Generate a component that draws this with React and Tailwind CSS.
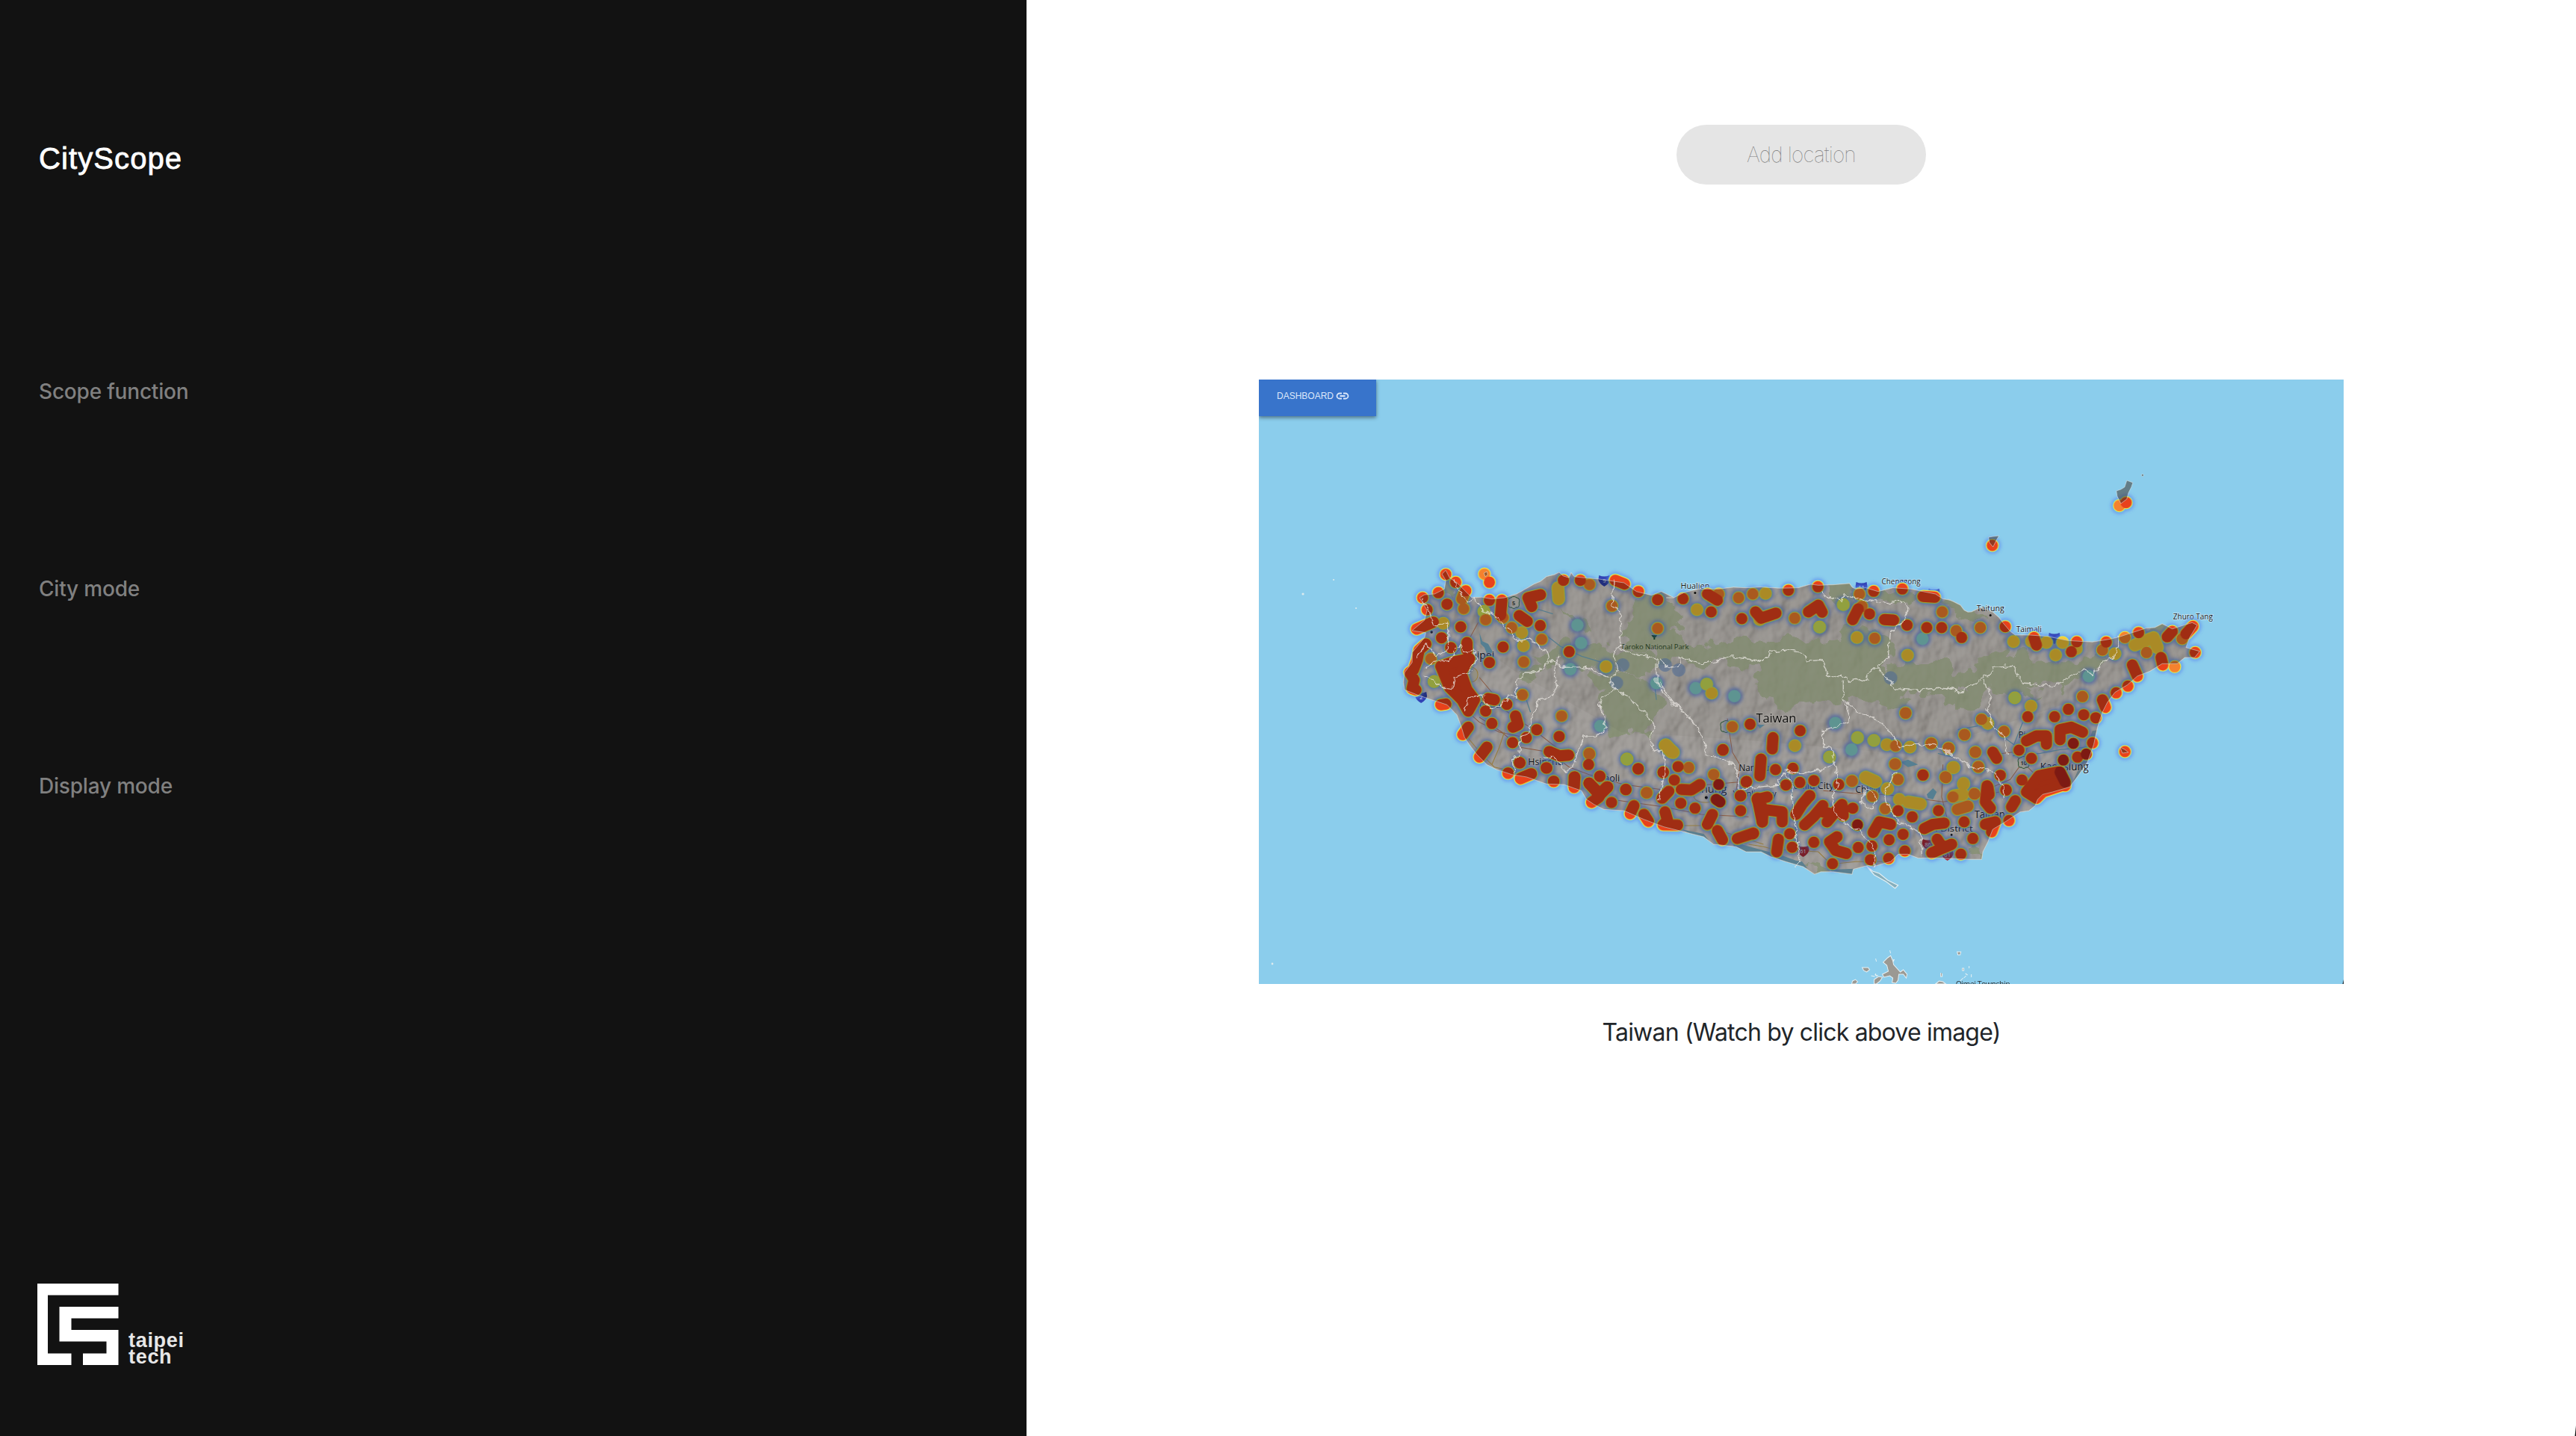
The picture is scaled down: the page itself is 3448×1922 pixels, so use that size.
import React from "react";

const COLORS = {
  r: "#e8421e",
  d: "#b5281a",
  o: "#f5822e",
  y: "#f7c838",
  g: "#d3e85c",
  t: "#8adbd2",
  b: "#749cd7",
};

/* Stations per map tile. Points are in tile units (three per pixel); chained points melt together. */
const TILES = [
  {
    at: [1840, 740],
    r: "285,86;325,118;365,152;192,180;210,228;255,160;290,206;235,278 168,306;345,297;268,341;305,380;205,366 178,390 170,430 155,470 140,480 158,510 150,545 165,550;370,360 370,390;460,190;510,190 505,250;460,118;265,610 285,607;445,635;455,585 480,590;470,685;565,655 575,690 555,700;530,608;375,700 353,730;450,780 420,820;553,762;608,742;650,710;740,737;460,440;515,378;665,168 615,180 630,215;580,252 612,275;664,292;757,110;825,110;965,110 1002,125;1058,155;1135,188;780,397;700,798 740,815 778,812;858,850;1057,866;1158,880;1007,950;583,843;535,884;585,905 628,887;688,863;718,917;803,900 800,935;903,897;860,925 905,970 935,940",
    rf: "265,455 310,440 380,425 345,480 370,550 400,590 375,635 350,590 300,540",
    d: "",
    o: "440,85;358,165 350,185;357,224;445,268;515,260;550,300;670,347;598,438;225,425;862,127;952,213;1135,303;860,805;750,655;593,570;1092,963",
    y: "590,320;275,283;735,140 738,185;597,373;928,457;1165,773 1190,800",
    g: "438,235;238,517;1012,828",
    t: "813,290;828,362;785,467;905,695;1130,523",
    b: "995,450;1165,450;970,522",
  },
  {
    at: [2220, 740],
    r: "97,184;195,165 235,190;210,237;333,264;388,237 410,262 470,242;520,150;638,136;600,237 640,210 655,238;800,225 778,268;845,245;862,154;977,145;1060,175 1107,178;905,268 942,270;996,290;1075,300;1135,300;257,790;458,742 455,787;410,828 405,895;468,870;538,865;567,714;366,688;352,918;510,932;566,922;622,914;722,930;605,975;328,975",
    d: "",
    o: "240,165;320,180;377,165;545,262;805,165;1137,237;866,343;990,643;295,698;1094,765;1163,785;948,848;1060,892;1150,900;775,917;950,775;815,215",
    y: "153,228;428,163;795,340;998,411;212,563;546,774;915,770;1008,780;830,903 868,920;918,947;958,908;1180,862;27,773 58,800;405,268",
    g: "645,298;740,208;797,742;863,753;685,820;192,527",
    t: "303,575;708,683;773,790;1058,345;148,543",
    b: "930,502;25,450;80,470",
  },
  {
    at: [2600, 620],
    r: "198,330;735,158;250,656;75,700;365,700 375,730;537,717;515,757;655,718;785,680;920,675 900,697;1003,655 975,685;1012,760;875,780 882,810;760,810 780,855;742,895;695,922;640,950 652,980;503,988;565,1010;613,1022;340,1018;448,1018;200,1160 215,1185;230,1253;317,1272;253,1312;335,1115 375,1095 415,1095 415,1128;305,1152;355,1185;470,1110 470,1070 515,1060 560,1080;600,1123;540,1180;730,1158;180,1300 185,1330;490,1295",
    rf: "335,1320 385,1255 460,1240 490,1290 400,1320 375,1345",
    d: "523,1125;575,1168;483,1192;470,1240 490,1280",
    o: "708,170;53,673;150,660;640,750;730,700;817,760;930,817;960,705;87,1090;245,1077;155,1028;130,1160;142,1220;22,1143;12,1262;127,1328;560,937",
    y: "355,715;415,720;283,716;480,720;452,770;535,745;690,765;770,730 845,700 860,740;353,975;180,1045;43,1222;82,1290;45,1335 80,1330",
    g: "288,942",
    t: "585,855",
    b: "",
  },
  {
    at: [1960, 940],
    r: "220,242;175,285;225,307 268,288;330,264;358,318;440,300 440,342;543,297;500,325 540,370 570,340;510,402 540,380;590,402;648,350;697,268;797,282;857,258;842,312;820,357 793,385;870,350 910,352 945,330;868,405;925,425;680,415 665,447;720,450 738,478;805,440 815,475 797,492 855,493;1037,192;1130,320;1107,375;1108,435;995,450 975,490;1015,515 1035,552;1095,547 1160,525;1175,385 1195,480",
    d: "1020,330;1010,390 1025,400",
    o: "1000,290;730,363;900,262;502,208",
    y: "808,170 838,202",
    g: "652,228",
    t: "",
    b: "",
  },
  {
    at: [2340, 940],
    r: "75,380 35,390 60,430 55,480;60,430 135,440 135,480;18,528;120,550 113,600;165,528;175,582;262,562;245,375 215,410 190,450;298,415 260,460 225,492;298,440 340,450 315,480;340,450 375,410 380,455;418,425;355,540 325,560 350,595 392,607;337,648;440,583;495,577;489,632;562,627;627,597;500,523 525,480 570,490;564,552;620,530;657,460;600,435;705,507 740,490 785,485;762,435;757,550 780,585 735,605;780,585 815,570;852,610;900,547;865,480;957,335 950,400 970,425;950,490 990,480 975,520;1045,475;1055,420 1070,395;1033,352;700,292",
    rf: "",
    d: "437,492",
    o: "497,377;548,427;415,315;820,380;905,367;838,430 880,417;922,258;600,310;588,248;790,300;732,165;803,185;910,200;866,130;630,43",
    y: "640,400 690,408;605,390;823,262;857,370;863,325;470,300 510,318;557,347",
    g: "",
    t: "",
    b: "",
  },
];

const toPath = (list) =>
  list
    .split(";")
    .filter(Boolean)
    .map((run) => {
      const pts = run.split(" ");
      return pts.length === 1 ? `M${pts[0]}h0.1` : `M${pts.join("L")}`;
    })
    .join("");

function HeatLayer({ kinds, width, color, opacity }) {
  return (
    <g fill="none" strokeLinecap="round" strokeLinejoin="round" opacity={opacity}>
      {kinds.map((k) =>
        TILES.map((t) => (
          <g key={`${k}-${t.at.join("-")}`} transform={`translate(${t.at.join(" ")}) scale(0.33333)`}>
            <path d={toPath(t[k])} stroke={color || COLORS[k]} strokeWidth={width} />
            {k === "r" && t.rf && (
              <path d={`M${t.rf.split(" ").join("L")}Z`} fill={color || COLORS.r} stroke={color || COLORS.r} strokeWidth={width} />
            )}
          </g>
        ))
      )}
    </g>
  );
}

const shift = (ox, oy, pts) =>
  pts
    .split(" ")
    .map((p) => {
      const [x, y] = p.split(",").map(Number);
      return `${(ox + x / 3).toFixed(1)},${(oy + y / 3).toFixed(1)}`;
    })
    .join(" ");

const LAND = [
  shift(1840, 740, "285,70 300,100 330,120 360,150 390,180 430,178 470,185 520,180 570,165 600,148 640,125 665,115 690,95 720,88 740,78 755,92 780,100 788,80 800,95 840,100 900,105 1000,120 1050,155 1110,170 1150,155 1200,180"),
  shift(2220, 740, "30,180 60,180 100,160 160,145 240,145 300,138 350,140 410,137 480,142 560,140 610,126 640,130 700,128 765,123 775,137 790,145 830,140 880,155 940,140 1010,145 1060,155 1110,165 1140,185 1170,190"),
  shift(2600, 620, "20,547 40,555 70,570 85,590 100,598 115,597 150,580 200,598 225,620 240,640 270,675 290,690 350,690 420,695 500,712 600,718 660,708 700,700 760,680 815,662 850,660 880,645 900,655 920,665 1000,640 1020,650 990,700 975,740 1030,755 1010,780 970,780 940,805 880,805 830,835 780,855 740,890 690,920 660,960 640,1000 620,1060 605,1130 580,1200 545,1250 520,1285 510,1300 440,1320 400,1330 380,1350"),
  shift(2340, 940, "1150,415 1125,435 1090,440 1030,480 980,510 960,560 940,600 935,630 880,630 750,625 680,625 640,610 600,610 570,640 530,650 500,660 480,655 420,670 415,690 340,680 290,680 265,690 220,660 150,640 90,620 50,600 0,600"),
  shift(1960, 940, "1130,600 1090,580 1000,570 960,540 880,520 800,500 720,470 640,435 560,430 520,410 490,390 470,355 440,345 400,330 330,328 250,300 190,290 130,270 90,250 50,210 20,170 0,140"),
  shift(1840, 740, "360,740 345,690 330,650 310,630 290,610 230,590 170,570 120,550 115,520 120,480 150,440 150,400 200,340 205,320 150,312 200,270 210,230 180,180 200,168 240,165 280,145 285,110 270,85"),
].join(" ");

const GREENS = [
  shift(1840, 740, "1035,190 1080,170 1130,160 1190,180 1230,190 1235,250 1200,310 1260,350 1280,400 1180,400 1080,395 1010,385 990,340 1020,300 1050,260 1025,220"),
  shift(1840, 740, "840,490 950,480 1050,490 1120,540 1155,580 1145,650 1100,670 1080,740 1000,730 930,710 910,620 900,580 930,545 860,520"),
  shift(1840, 740, "700,390 760,350 880,380 960,430 970,480 880,460 790,460 700,450 640,410"),
  shift(1840, 740, "560,480 640,455 700,440 690,480 640,500 570,500"),
  shift(1840, 740, "730,240 800,240 850,270 880,330 840,320 790,260"),
  shift(1840, 740, "285,100 310,120 330,170 300,172 275,150"),
  shift(1840, 740, "870,390 940,380 1000,390 1100,400 1150,440 1120,500 1010,480 950,440 880,420"),
  shift(2220, 740, "0,370 110,390 200,375 330,340 430,360 560,335 620,350 680,365 780,310 900,330 940,350 925,420 890,460 950,540 1060,550 1160,540 1260,580 1150,600 1010,540 960,640 900,620 830,580 760,610 700,600 640,590 560,615 460,610 400,570 420,520 370,450 270,440 180,460 90,430 0,430"),
  shift(2220, 740, "930,450 1000,440 1150,445 1200,500 1180,550 1050,550 960,550 900,500"),
  shift(2220, 740, "660,130 770,125 790,180 730,190 670,170"),
  shift(2220, 740, "830,170 900,140 990,150 1100,170 1170,190 1230,210 1250,230 1180,230 1100,180 1000,195 900,205"),
  shift(2600, 620, "0,545 40,555 75,590 140,595 180,605 150,630 90,630 30,600"),
  shift(2600, 620, "160,770 260,745 350,770 420,790 560,790 640,760 690,790 630,840 540,870 450,895 330,900 400,930 330,940 260,920 180,930 130,980 40,980 20,930 90,900 0,900 0,820 110,850"),
  shift(2600, 620, "790,670 880,645 920,680 850,690"),
  shift(2340, 940, "215,650 300,665 410,675 400,690 265,688"),
  shift(2340, 940, "915,590 945,590 935,628 910,625"),
];

const BORDERS = [
  shift(1840, 740, "310,105 345,155 370,198 400,182 430,225 480,250 520,290 575,352 625,345 690,400 700,440 650,480 600,480 565,520 570,580 540,570 500,615 460,620 430,570 380,580 360,630"),
  shift(1840, 740, "700,430 760,460 850,458 900,485 940,500 965,548 1005,570 1060,620 1100,660 1125,690 1105,740 1115,800 1150,790 1170,830 1160,900 1140,990"),
  shift(1840, 740, "965,548 920,570 900,605 930,700 890,735 840,735 800,840 770,880 720,820 680,820"),
  shift(1840, 740, "740,410 720,460 730,540 700,580 655,590 630,670 610,730 585,740 580,820 550,830 560,880"),
  shift(1840, 740, "960,110 950,210 993,245 985,370 960,400 975,480 940,500"),
  shift(1840, 740, "970,380 1040,405 1130,425 1130,520 1150,550 1200,610"),
  shift(1840, 740, "192,180 212,225 235,290 265,290 290,285 300,330 290,390 250,410 205,365 165,420"),
  shift(1840, 740, "200,470 230,440 300,430 340,370 360,400 400,390 410,430 380,480 320,500 310,545 270,540 200,490"),
  shift(2220, 740, "0,425 45,465 78,462 88,418 150,440 220,440 280,415 420,435 450,400 520,392 575,400 595,435 655,430 675,488 720,500 735,490 760,515 790,505 830,520 850,465 880,465 950,545 1040,552 1130,540 1200,550"),
  shift(2220, 740, "655,155 670,175 735,190 740,170 830,190 920,200 985,195 1000,230 975,280 930,320 920,415 875,460"),
  shift(2220, 740, "740,515 740,590 765,640 760,680 700,700 660,710 660,780 695,780 705,850 650,870 570,890 500,870"),
  shift(2220, 740, "745,590 800,640 860,660 930,720 960,780 1020,765 1110,770 1180,810"),
  shift(2220, 740, "0,520 60,600 110,650 155,700 190,780 185,815 240,820 310,860 325,950 400,940 480,930 495,880 570,890"),
  shift(2600, 620, "0,900 80,918 150,870 190,850 200,820 280,815 320,885 450,895 500,865 570,825 600,850 640,800 690,775 710,705 700,695"),
  shift(2600, 620, "160,870 195,930 175,990 200,1050 250,1110 260,1170"),
  shift(2600, 620, "0,1150 110,1220 205,1240 240,1290 245,1350"),
  shift(2340, 940, "345,240 360,320 335,380 355,455 470,540 510,600 505,660"),
  shift(2340, 940, "590,280 560,330 545,360 550,400 600,480 690,520 695,620"),
  shift(2340, 940, "470,340 515,380 495,430 450,400 470,350"),
  shift(2340, 940, "140,280 175,330 180,450 205,620 190,660"),
];

const ROADS = [
  shift(1840, 740, "415,280 385,335 320,410 300,520 330,600 420,680 500,720 600,740"),
  shift(1840, 740, "420,500 470,560 520,630 650,720 740,790"),
  shift(1960, 940, "60,60 150,120 220,180 340,200 420,260 500,290 640,330 790,350 870,340 1100,320"),
  shift(1960, 940, "590,390 800,420 950,450 1140,460"),
  shift(2220, 740, "275,665 295,800 325,850 310,960"),
  shift(2340, 940, "300,355 420,365 540,370 640,380 780,400 900,380 1060,350"),
  shift(2340, 940, "780,250 775,380 800,480"),
  shift(2600, 620, "200,1170 280,1160 320,1200 270,1270 200,1300"),
  shift(2600, 620, "320,1200 370,1250 430,1260"),
  shift(2600, 620, "320,1200 345,1120"),
];

const YELLOW_ROADS = [
  shift(1840, 740, "320,640 345,690 380,750 430,810 480,860 570,880"),
  shift(1840, 740, "520,720 500,780 470,850"),
  shift(2340, 940, "0,570 60,580 100,590 280,600 330,650 430,640 540,640"),
  shift(1960, 940, "780,480 860,495 960,495 1200,570"),
];

const RIVERS = [
  shift(1840, 740, "680,325 745,375 830,415 930,445"),
  shift(1840, 740, "1120,500 1130,590"),
  shift(1840, 740, "605,580 625,640"),
  shift(1840, 740, "650,225 715,245"),
  shift(2600, 620, "180,1030 230,1090 285,1130 320,1040"),
  shift(2600, 620, "60,1070 140,1055"),
  shift(2600, 620, "280,1175 390,1165 470,1150 580,1140"),
  shift(2340, 940, "165,280 180,420 195,560"),
  shift(2340, 940, "760,205 820,220"),
];

const LAKES = [
  shift(1840, 740, "420,320 432,355 455,365 475,400 450,405 440,380 425,365"),
  shift(2220, 740, "970,840 1000,830 1040,850 1000,860"),
  shift(2340, 940, "715,370 740,345 755,360 740,390 720,385"),
  shift(2220, 740, "395,690 425,690 405,705"),
];

const LABELS = [
  [1961, 882, 14, 39, "Taipei"],
  [1966, 947, 12, 50, "Taoyuan"],
  [2045, 1024, 13, 47, "Hsinchu"],
  [2132, 1046, 12, 36, "Miaoli"],
  [2249, 788, 11.5, 39, "Hualien"],
  [2518, 782, 11, 52, "Chenggong"],
  [2645, 818, 11.5, 37, "Taitung"],
  [2698, 846, 11, 34, "Taimali"],
  [2908, 829, 11, 53, "Zhuro Tang"],
  [2327, 1032, 12, 41, "Nantou"],
  [2250, 1061, 14, 61, "Taichung"],
  [2319, 1066, 11, 58, "Yuanlin City"],
  [2391, 1056, 12, 63, "Douliu City"],
  [2483, 1061, 12, 33, "Chiayi"],
  [2642, 1095, 14, 41, "Tainan"],
  [2572, 1113, 11.5, 68, "Jiali District"],
  [2701, 988, 12, 46, "Pingtung"],
  [2730, 1031, 14, 65, "Kaohsiung"],
];

function Shield({ x, y, color, label }) {
  return (
    <g transform={`translate(${x} ${y})`}>
      <path d="M-7,-7Q0,-4 7,-7L8,-1Q6,5 0,8Q-6,5 -8,-1Z" fill={color} />
      {label && (
        <text y="3" textAnchor="middle" fontSize="7.5" fill="#dfe0ee">
          {label}
        </text>
      )}
    </g>
  );
}

function Flower({ x, y, label }) {
  return (
    <g transform={`translate(${x} ${y})`}>
      <path d="M-4,-7Q0,-10 4,-7Q9,-6 7,0Q8,7 3,6Q0,9 -3,6Q-8,7 -7,0Q-9,-6 -4,-7Z" fill="#dedbd0" stroke="#3f7a4b" strokeWidth="1" />
      {label && (
        <text y="3" textAnchor="middle" fontSize="7.5" fontWeight="600" fill="#222">
          {label}
        </text>
      )}
    </g>
  );
}

function HeatMap() {
  return (
    <svg className="block h-full w-full" viewBox="1685 508 1451 809" preserveAspectRatio="none" fontFamily="'Open Sans', 'Noto Sans', sans-serif">
      <defs>
        <clipPath id="island">
          <polygon points={LAND} />
        </clipPath>
        <filter id="soft" filterUnits="userSpaceOnUse" x="1685" y="508" width="1451" height="809">
          <feGaussianBlur stdDeviation="2.2" />
        </filter>
        <filter id="edge" filterUnits="userSpaceOnUse" x="1685" y="508" width="1451" height="809">
          <feGaussianBlur stdDeviation="0.5" />
        </filter>
        <filter id="rough" filterUnits="userSpaceOnUse" x="1685" y="508" width="1451" height="809">
          <feTurbulence type="fractalNoise" baseFrequency="0.12" numOctaves="2" seed="3" />
          <feDisplacementMap in="SourceGraphic" scale="9" xChannelSelector="R" yChannelSelector="G" />
        </filter>
        <filter id="patchy" filterUnits="userSpaceOnUse" x="1685" y="508" width="1451" height="809">
          <feTurbulence type="fractalNoise" baseFrequency="0.04" numOctaves="3" seed="5" />
          <feDisplacementMap in="SourceGraphic" scale="38" xChannelSelector="R" yChannelSelector="G" />
        </filter>
        <filter id="relief" x="0" y="0" width="100%" height="100%">
          <feTurbulence type="fractalNoise" baseFrequency="0.04 0.03" numOctaves="3" seed="8" result="n" />
          <feDiffuseLighting in="n" surfaceScale="6" lightingColor="#ffffff" result="l">
            <feDistantLight azimuth="215" elevation="42" />
          </feDiffuseLighting>
        </filter>
      </defs>

      <rect x="1685" y="508" width="1451" height="809" fill="#8bcdec" />

      <polygon points={LAND} fill="#e9e1da" stroke="#e9e1da" strokeWidth="1" />
      <g clipPath="url(#island)">
        <g fill="#c2cfa8" filter="url(#patchy)">
          {GREENS.map((p, i) => (
            <polygon key={i} points={p} />
          ))}
        </g>
        <polygon points="1870,760 2980,740 3000,860 2800,930 2560,1010 2330,990 2170,980 2030,900 1900,810" fill="#5d5a48" opacity="0.06" />
        <rect x="1870" y="740" width="1100" height="450" filter="url(#relief)" className="mix-blend-soft-light" opacity="0.3" />
        <g fill="none" stroke="#7eb6cc" strokeWidth="1.3">
          {RIVERS.map((p, i) => (
            <polyline key={i} points={p} />
          ))}
        </g>
        {LAKES.map((p, i) => (
          <polygon key={i} points={p} fill="#7cb9d4" />
        ))}
        <polygon points={shift(2340, 940, "-60,560 0,578 60,595 120,610 190,635 215,640 235,665 200,665 90,640 -60,610")} fill="#83b8cf" />
        <polygon points={shift(2340, 940, "330,672 425,668 420,692 340,690")} fill="#83b8cf" />
        <polygon points={shift(1960, 940, "870,510 960,528 985,560 1000,575 940,545")} fill="#83b8cf" />
        <polygon points={shift(2600, 620, "600,1075 618,1072 600,1140 560,1250 520,1285 560,1190")} fill="#93b3c0" />
        <g fill="none" stroke="#c98460" strokeWidth="1">
          {ROADS.map((p, i) => (
            <polyline key={i} points={p} />
          ))}
        </g>
        <g fill="none" stroke="#d9b55f" strokeWidth="1.1">
          {YELLOW_ROADS.map((p, i) => (
            <polyline key={i} points={p} />
          ))}
          <ellipse cx="1969" cy="903" rx="9" ry="10" fill="#d8d3bd" />
          <ellipse cx="2282" cy="1066" rx="15" ry="8" />
        </g>
      </g>

      <path d="M2497,1158L2506,1166L2515,1169L2526,1178L2540,1185L2536,1189L2524,1180L2508,1171Z" fill="#86aebb" stroke="#e3eff3" strokeWidth="1.2" />

      <g fill="#14161a" stroke="#ffffff" strokeWidth="1.6" strokeOpacity="0.55" paintOrder="stroke">
        {LABELS.map(([x, y, size, length, name]) => (
          <text key={name} x={x} y={y} fontSize={size} textLength={length} lengthAdjust="spacingAndGlyphs">
            {name}
          </text>
        ))}
      </g>
      <g fill="#111">
        <circle cx="2268.5" cy="793.5" r="1.5" />
        <circle cx="2663.5" cy="823.5" r="1.5" />
        <circle cx="2283.5" cy="1067.5" r="2" />
        <circle cx="1916" cy="846" r="1.7" />
        <circle cx="2611.5" cy="1117.5" r="1.4" />
      </g>
      <text x="2169" y="869" fontSize="9.5" textLength="91" fill="#35552c">
        Taroko National Park
      </text>
      <path d="M2210,850h8l-2,3h-1v3h-2v-3h-1Z" fill="#1c5a34" />

      <Shield x={2147} y={777} color="#3243b5" label="9" />
      <Shield x={2491} y={786} color="#3243b5" label="11" />
      <Shield x={2588} y={795} color="#3243b5" />
      <Shield x={2749} y={854} color="#3243b5" />
      <Shield x={1902} y={933} color="#3243b5" label="2" />
      <Shield x={2413} y={1139} color="#b02d3e" label="61" />
      <Shield x={2580} y={1130} color="#b02d3e" label="86" />
      <Shield x={2606} y={1144} color="#b02d3e" label="61" />
      <Flower x={2026} y={807} label="5" />
      <Flower x={2708} y={1021} label="10" />
      <Flower x={2310} y={973} />

      <g filter="url(#soft)">
        <HeatLayer kinds={["r", "d", "o", "y", "g", "t"]} width={68} color="#5b86f0" opacity={0.65} />
      </g>
      <g filter="url(#edge)">
        <HeatLayer kinds={["b"]} width={54} opacity={0.6} />
        <HeatLayer kinds={["t"]} width={50} opacity={0.95} />
        <HeatLayer kinds={["r", "d", "o", "y", "g"]} width={56} color="#7fd6c4" opacity={0.8} />
        <HeatLayer kinds={["r", "d", "o", "y", "g"]} width={51} color="#f2e23f" />
        <HeatLayer kinds={["g", "y", "o", "r", "d"]} width={45} />
      </g>

      <polygon points={LAND} fill="#000000" opacity="0.31" />
      <polygon points={LAND} fill="none" stroke="#c4ccca" strokeWidth="0.9" opacity="0.7" />

      <g fill="#3c2e22" fillOpacity="0.5" stroke="#e8eef0" strokeWidth="0.5">
        <path d="M2832,657L2838,655L2843,652L2846,643L2854,646L2852,652L2848,660L2846,668L2838,674L2833,664Z" />
        <path d="M2661,719L2667,718L2675,717L2671,724L2667,732L2662,726Z" />
        <circle cx="2867" cy="636" r="1.5" />
        <path d="M2837,1000L2843,1003L2848,1007L2840,1008Z" />
        <path d="M1986,767l4,-2l1,4l-3,3Z" />
      </g>

      <g fill="none" stroke="#ece9e4" strokeWidth="1.3" strokeLinejoin="round" opacity="0.75" filter="url(#rough)">
        {BORDERS.map((p, i) => (
          <polyline key={i} points={p} />
        ))}
      </g>

      <text x="2350" y="967" fontSize="16.5" fontWeight="500" textLength="54" fill="#0b0b0b" stroke="#c9c6c0" strokeWidth="1.6" strokeOpacity="0.5" paintOrder="stroke">
        Taiwan
      </text>

      <g fill="#9b9993" stroke="#e6f1f5" strokeWidth="1">
        <path d="M2526,1282L2530,1279L2533,1286L2534,1291L2543,1301L2547,1298L2552,1304L2551,1309L2547,1304L2541,1304L2540,1312L2537,1316L2532,1315L2533,1309L2529,1306L2521,1308L2519,1304L2527,1300L2525,1292L2520,1288Z" />
        <path d="M2508,1311l6,-4l5,1l-3,5l-5,4h-3Z" />
        <path d="M2479,1313l4,-2l3,3l-3,3h-5ZM2492,1295h8l2,3l-4,3l-4,-2ZM2504,1306l5,1M2509,1304l3,2M2511,1307l2,-2M2510,1303v3M2534,1287v-3M2529,1272l1,4M2534,1286l1,-2M2510,1283l1,4M2635,1293v3M2630,1303l3,2M2628,1309l3,-3M2623,1313l4,-4M2638,1304v4" />
        <path d="M2619,1274h5l-1,4h-3ZM2626,1296h2v3h-2ZM2597,1302v5h2v-4M2590,1317l5,-4l5,1l4,3Z" />
      </g>
      <g fill="#dcebee">
        <circle cx="1744" cy="795" r="1.6" />
        <circle cx="1785" cy="776" r="1.1" />
        <circle cx="1815" cy="814" r="1.1" />
        <circle cx="1703" cy="1290" r="1.4" />
      </g>
      <text x="2617" y="1321" fontSize="10.5" textLength="73" fill="#2b2e31">
        Qimei Township
      </text>
      <path d="M3136,1311V1317H3134.500Z" fill="#10202a" />
    </svg>
  );
}

function Logo() {
  return (
    <div className="flex h-[110px] w-[196px] items-end">
      <svg className="h-[109px] w-[109px] shrink-0" viewBox="0 0 109 109" fill="#ffffff">
        <path d="M0,0H108.500V15.500H14V93.500H45.500V109H0Z" />
        <path d="M29.500,31H108.500V46.500H45.500V62H108.500V109H61V93.500H92.500V77.500H29.500Z" />
      </svg>
      <div className="ml-[13px] shrink-0 whitespace-nowrap text-[27px] leading-[22px] font-bold tracking-[0.7px] text-white/90">
        taipei
        <br />
        tech
      </div>
    </div>
  );
}

export default function App() {
  return (
    <div className="relative flex h-[1922px] w-full overflow-hidden bg-white">
      <aside className="flex h-full w-[1374px] shrink-0 flex-col bg-[#121212] pl-[52px] font-['Liberation_Sans',sans-serif]">
        <h1 className="mt-[182px] h-[60px] text-[40px] leading-[60px] tracking-[1.1px] text-white [-webkit-text-stroke:0.8px_white]">CityScope</h1>
        <nav className="mt-[262px] flex flex-col gap-[224px] font-['Inter',sans-serif] text-[28px] leading-10 font-medium tracking-[-0.2px] text-[#808080]">
          <span>Scope function</span>
          <span>City mode</span>
          <span>Display mode</span>
        </nav>
        <div className="mt-auto mb-[95px] -ml-0.5">
          <Logo />
        </div>
      </aside>

      <main className="flex flex-1 flex-col items-center">
        <button className="mt-[167px] h-20 w-[334px] rounded-full bg-[#e5e5e5] font-['Inter',sans-serif] text-[28px] font-thin tracking-[-0.8px] text-[#808080]">
          Add location
        </button>
        <figure className="mt-[261px] flex w-[1452px] flex-col items-center">
          <div className="relative h-[809px] w-full overflow-hidden">
            <HeatMap />
            <div className="absolute top-0 left-0 flex h-[49px] w-[157px] items-start bg-[#3874cb] pt-[15px] pl-6 font-['Liberation_Sans',sans-serif] text-[12px] leading-[14px] text-[#dce8fa] shadow-[0_2px_5px_rgba(0,0,0,0.45)]">
              DASHBOARD
              <svg className="mt-px ml-[3px] h-3 w-[18px]" viewBox="0 0 18 12" fill="none" stroke="#dce8fa" strokeWidth="1.8">
                <path d="M8,2.500H5A3.500,3.500 0 0 0 5,9.500H8M10,2.500H13A3.500,3.500 0 0 1 13,9.500H10M5.500,6H12.500" />
              </svg>
            </div>
          </div>
          <figcaption className="mt-[41px] h-12 font-['Inter',sans-serif] text-[32px] leading-[48px] tracking-[-0.8px] whitespace-nowrap text-[#212529]">
            Taiwan (Watch by click above image)
          </figcaption>
        </figure>
      </main>

      <svg className="absolute right-0 bottom-0 h-3.5 w-0.5" viewBox="0 0 2 14" fill="#111111">
        <path d="M2,0V14H0.500Z" />
      </svg>
    </div>
  );
}
